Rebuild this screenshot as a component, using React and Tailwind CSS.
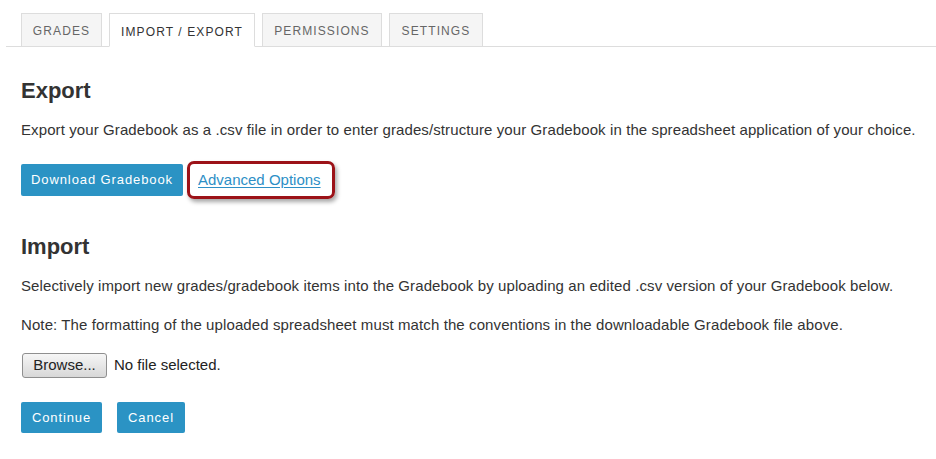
const tabs = [
  { label: 'GRADES', width: 'w-[81px]' },
  { label: 'IMPORT / EXPORT', width: 'w-[146px]', active: true },
  { label: 'PERMISSIONS', width: 'w-[120px]' },
  { label: 'SETTINGS', width: 'w-[94px]' },
];

const Tab = ({ label, width, active }) => (
  <div
    className={
      active
        ? `${width} h-[34px] -mb-px border border-[#dddddd] border-b-white bg-white text-[#333333] text-[12px] tracking-[1.1px] flex items-center justify-center pt-[4px]`
        : `${width} h-[33px] border border-b-0 border-[#dddddd] bg-[#f5f5f5] text-[#666666] text-[12px] tracking-[1.1px] flex items-center justify-center pt-px`
    }
  >
    {label}
  </div>
);

const BlueButton = ({ children, className = '' }) => (
  <button
    className={`bg-[#2b93c4] text-white text-[13px] tracking-[0.9px] rounded-[2px] flex items-center justify-center ${className}`}
  >
    {children}
  </button>
);

export default function App() {
  return (
    <div className="min-h-screen bg-white font-['Liberation_Sans',Arial,sans-serif] text-[#333333]">
      {/* Tabs */}
      <div className="pt-[13px] pl-[6px]">
        <div className="flex items-end border-b border-[#dddddd] pl-[15px] gap-[7px]">
          {tabs.map((tab) => (
            <Tab key={tab.label} {...tab} />
          ))}
        </div>
      </div>

      <div className="pl-[21px] pr-[12px]">
        {/* Export */}
        <h2 className="mt-[32px] text-[22px] leading-[24px] font-bold">Export</h2>
        <p className="mt-[17px] text-[15px] leading-[20px] tracking-[0.1px]">
          Export your Gradebook as a .csv file in order to enter grades/structure your Gradebook in the spreadsheet application of your choice.
        </p>
        <div className="mt-[21px] flex items-center">
          <BlueButton className="w-[162px] h-[32px]">Download Gradebook</BlueButton>
          <div className="ml-[4px] w-[148px] h-[38px] border-[3px] border-[#9c1218] rounded-[7px] shadow-[2px_3px_4px_rgba(0,0,0,0.35)] flex items-center pl-[8px]">
            <a href="#" className="text-[15px] text-[#2d8fc6] underline underline-offset-2">
              Advanced Options
            </a>
          </div>
        </div>

        {/* Import */}
        <h2 className="mt-[36px] text-[22px] leading-[24px] font-bold">Import</h2>
        <p className="mt-[17px] text-[15px] leading-[20px] tracking-[0.1px]">
          Selectively import new grades/gradebook items into the Gradebook by uploading an edited .csv version of your Gradebook below.
        </p>
        <p className="mt-[19px] text-[15px] leading-[20px] tracking-[0.1px]">
          Note: The formatting of the uploaded spreadsheet must match the conventions in the downloadable Gradebook file above.
        </p>
        <div className="mt-[18px] flex items-center">
          <button className="ml-px w-[85px] h-[25px] border border-[#8f8f8f] rounded-[3px] bg-gradient-to-b from-[#f6f6f6] to-[#d8d8d8] text-[15px] text-[#222222] flex items-center justify-center">
            Browse...
          </button>
          <span className="ml-[7px] text-[15px] text-[#222222]">No file selected.</span>
        </div>
        <div className="mt-[24px] flex items-center gap-[15px]">
          <BlueButton className="w-[81px] h-[31px]">Continue</BlueButton>
          <BlueButton className="w-[68px] h-[31px]">Cancel</BlueButton>
        </div>
      </div>
    </div>
  );
}
